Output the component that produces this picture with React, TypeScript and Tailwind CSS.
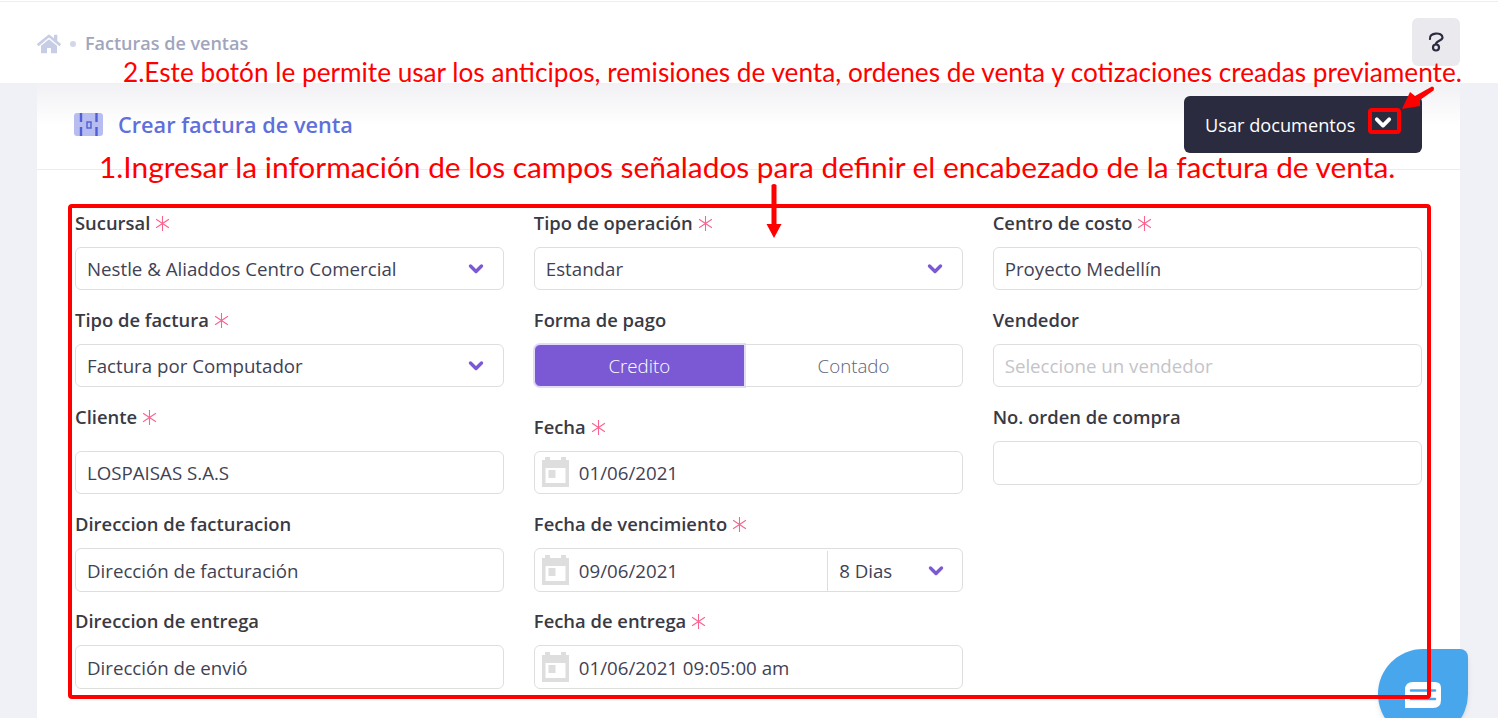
import { FaHome } from "react-icons/fa";

function Chevron({ className }: { className?: string }) {
  return (
    <svg viewBox="0 0 16 12" className={className} fill="none" stroke="currentColor" strokeWidth="3.4" strokeLinecap="round" strokeLinejoin="round">
      <path d="M2.5 3 L8 8.5 L13.5 3" />
    </svg>
  );
}

function Calendar() {
  return (
    <svg viewBox="0 0 27 30" className="-mt-[3px] h-[30px] w-[27px] shrink-0" fill="#dedede">
      <rect x="3" y="0" width="5" height="5" />
      <rect x="19" y="0" width="5" height="5" />
      <path d="M0 3 H27 V30 H0 Z M3.5 11 V26 H23.5 V11 Z" fillRule="evenodd" />
      <rect x="6.5" y="13" width="7" height="8" />
    </svg>
  );
}

function Star() {
  return (
    <svg viewBox="0 0 14 14" className="ml-[5px] inline-block h-[15px] w-[15px]" stroke="#f8638f" strokeWidth="1" fill="none">
      <path d="M7 0 V14 M1 3 L13 11 M13 3 L1 11" />
    </svg>
  );
}

function Label({ text, required, className }: { text: string; required?: boolean; className?: string }) {
  return (
    <div className={`flex h-6 items-center text-[18.4px] leading-6 font-semibold text-[#3a3a44] ${className ?? ""}`}>
      {text}
      {required && <Star />}
    </div>
  );
}

function Box({ children, className }: { children: React.ReactNode; className?: string }) {
  return (
    <div className={`flex items-center rounded-md border border-[#dedede] bg-white text-[18.7px] text-[#3f4254] ${className ?? "h-[43px] pt-px"}`}>
      {children}
    </div>
  );
}

function Select({ value }: { value: string }) {
  return (
    <Box className="h-[43px] justify-between pt-px pr-[19px] pl-[11px]">
      <span>{value}</span>
      <Chevron className="h-3 w-4 text-[#7b59d4]" />
    </Box>
  );
}

function Field({ label, value, required, muted, labelGap, tall }: { label: string; value?: string; required?: boolean; muted?: boolean; labelGap?: string; tall?: boolean }) {
  return (
    <div className="mt-[18px]">
      <Label text={label} required={required} className={labelGap ?? "mb-[12px]"} />
      <Box className={`px-[11px] ${tall ? "h-[44px] pt-[2px]" : "h-[43px] pt-px"}`}>
        <span className={muted ? "text-[#c4c4c8]" : ""}>{value}</span>
      </Box>
    </div>
  );
}

function DateBox({ value, tall }: { value: string; tall?: boolean }) {
  return (
    <Box className={`gap-[10px] pl-[7px] ${tall ? "h-[44px] pt-[2px]" : "h-[43px] pt-px"}`}>
      <Calendar />
      <span>{value}</span>
    </Box>
  );
}

export default function App() {
  return (
    <div className="relative h-[718px] w-[1498px] overflow-hidden bg-[#f0f1f7] font-['Open_Sans',sans-serif]">
      {/* top bar */}
      <header className="h-[83px] bg-white pt-px">
        <div className="h-px bg-[#eeeeee]" />
        <div className="flex items-start justify-between pt-4 pr-[38px] pl-[37px]">
          <div className="mt-[12px] flex items-center">
            <FaHome className="h-[22px] w-[24px] text-[#c8cde6]" />
            <span className="mx-[9px] h-[6px] w-[6px] rounded-full bg-[#d3d6e8]" />
            <span className="text-[18px] font-semibold text-[#a0a5be]">Facturas de ventas</span>
          </div>
          <button type="button" className="flex h-12 w-12 items-center justify-center rounded-md bg-[#e9e9ee]">
            <svg viewBox="0 0 16 20" className="h-5 w-4" fill="none" stroke="#2b2b40" strokeWidth="2.2" strokeLinecap="round">
              <path d="M2 7 C0.5 0.5 14.5 -0.5 14.5 5.5 C14.5 9 8 8.5 8 12" />
              <circle cx="8" cy="15.5" r="3" />
            </svg>
          </button>
        </div>
      </header>

      {/* card */}
      <main className="ml-[37px] h-[635px] w-[1423px] bg-white">
        <div className="flex h-[87px] items-start justify-between border-b border-[#ececef] bg-gradient-to-b from-[#f1f1f5] via-white to-white pt-[13px] pr-[38px] pl-[37px]">
          <div className="mt-[17px] flex items-center gap-[15px]">
            <svg viewBox="0 0 29 23" className="h-[23px] w-[29px]">
              <rect width="29" height="23" rx="3" fill="#b7bdf0" />
              <path d="M7 0 V9 M7 14 V23 M22.5 0 V9 M22.5 14 V23" stroke="#4f5fd8" strokeWidth="2.4" />
              <rect x="13" y="9" width="4" height="6" fill="none" stroke="#4f5fd8" strokeWidth="1.4" />
            </svg>
            <h1 className="text-[21.7px] leading-[23px] font-semibold text-[#5f6fdc]">Crear factura de venta</h1>
          </div>
          <button type="button" className="flex h-[57px] w-[238px] items-center gap-[19px] rounded-md bg-[#2b2b40] pt-[2px] pl-[21px] text-[18.2px] text-white">
            Usar documentos
            <Chevron className="-mt-[6px] h-[13.5px] w-[18px] text-white" />
          </button>
        </div>

        <div className="grid grid-cols-3 gap-[29.5px] px-[38px] pt-[41px]">
          <div>
            <Label text="Sucursal" required className="mb-[12px]" />
            <Select value="Nestle & Aliaddos Centro Comercial" />
            <div className="mt-[18px]">
              <Label text="Tipo de factura" required className="mb-[12px]" />
              <Select value="Factura por Computador" />
            </div>
            <Field label="Cliente" value="LOSPAISAS S.A.S" required labelGap="mb-[22px]" />
            <Field label="Direccion de facturacion" value="Dirección de facturación" tall />
            <div className="-mt-px">
              <Field label="Direccion de entrega" value="Dirección de envió" tall />
            </div>
          </div>

          <div>
            <Label text="Tipo de operación" required className="mb-[12px]" />
            <Select value="Estandar" />
            <div className="mt-[18px]">
              <Label text="Forma de pago" className="mb-[12px]" />
              <div className="flex h-[43px] text-[18.7px] font-light">
                <div className="flex w-[211px] items-center justify-center rounded-l-md border border-[#e3dcf7] bg-[#7b59d4] pt-px text-white shadow-[0_0_0_1px_#e3dcf7]">
                  Credito
                </div>
                <div className="flex flex-1 items-center justify-center rounded-r-md border border-l-0 border-[#dedede] pt-px text-[#5e6278]">
                  Contado
                </div>
              </div>
            </div>
            <div className="mt-[28px]">
              <Label text="Fecha" required className="mb-[12px]" />
              <DateBox value="01/06/2021" />
            </div>
            <div className="mt-[18px]">
              <Label text="Fecha de vencimiento" required className="mb-[12px]" />
              <div className="flex h-[44px] items-center rounded-md border border-[#dedede] pt-[2px] text-[18.7px] text-[#3f4254]">
                <div className="flex h-full flex-1 items-center gap-[10px] border-r border-[#dedede] pl-[7px]">
                  <Calendar />
                  <span>09/06/2021</span>
                </div>
                <div className="flex w-[134px] items-center justify-between pr-[18px] pl-[11px]">
                  <span>8 Dias</span>
                  <Chevron className="h-3 w-4 text-[#7b59d4]" />
                </div>
              </div>
            </div>
            <div className="mt-[17px]">
              <Label text="Fecha de entrega" required className="mb-[12px]" />
              <DateBox value="01/06/2021 09:05:00 am" tall />
            </div>
          </div>

          <div>
            <Label text="Centro de costo" required className="mb-[12px]" />
            <Box className="h-[43px] px-[11px] pt-px">Proyecto Medellín</Box>
            <Field label="Vendedor" value="Seleccione un vendedor" muted />
            <Field label="No. orden de compra" tall />
          </div>
        </div>
      </main>

      {/* chat launcher */}
      <div className="absolute top-[649px] left-[1378px] flex h-[90px] w-[90px] items-start justify-center rounded-tl-[45px] rounded-tr-lg rounded-br-[45px] rounded-bl-[45px] bg-[#48a6ec] pt-[33px] shadow-md">
        <svg viewBox="0 0 36 26" className="h-[26px] w-9">
          <path d="M8 0 H30 Q36 0 36 6 V18 Q36 26 28 26 H0 V8 Q0 0 8 0 Z" fill="white" />
          <path d="M6 8.5 H30 M6 17 H30" stroke="#48a6ec" strokeWidth="2.6" strokeLinecap="round" />
        </svg>
      </div>

      {/* tutorial annotations */}
      <p className="absolute top-[55px] left-[123px] font-['Lato',sans-serif] text-[26.2px] leading-[34px] whitespace-nowrap text-[#ff0000]">
        2.Este botón le permite usar los anticipos, remisiones de venta, ordenes de venta y cotizaciones creadas previamente.
      </p>
      <p className="absolute top-[148px] left-[99px] font-['Lato',sans-serif] text-[29.85px] leading-[38px] whitespace-nowrap text-[#ff0000]">
        1.Ingresar la información de los campos señalados para definir el encabezado de la factura de venta.
      </p>
      <div className="pointer-events-none absolute top-[204px] left-[68px] h-[495px] w-[1363px] rounded-sm border-4 border-[#ff0000]" />
      <div className="pointer-events-none absolute top-[108px] left-[1368px] h-[26px] w-[33px] rounded-sm border-4 border-[#ff0000]" />
      <svg viewBox="0 0 20 54" className="absolute top-[184px] left-[764px] h-[54px] w-5" fill="#ff0000">
        <path d="M7.5 1 Q10 -1 12.5 1 V40 H17.5 L10 54 L2.5 40 H7.5 Z" />
      </svg>
      <svg viewBox="0 0 36 26" className="absolute top-[85px] left-[1400px] h-[26px] w-9" fill="#ff0000">
        <path d="M32 1.5 Q35 2 33.5 5.5 L20 15 L20 21 L2 24 L10 7 L15 11 Z" />
      </svg>
    </div>
  );
}
